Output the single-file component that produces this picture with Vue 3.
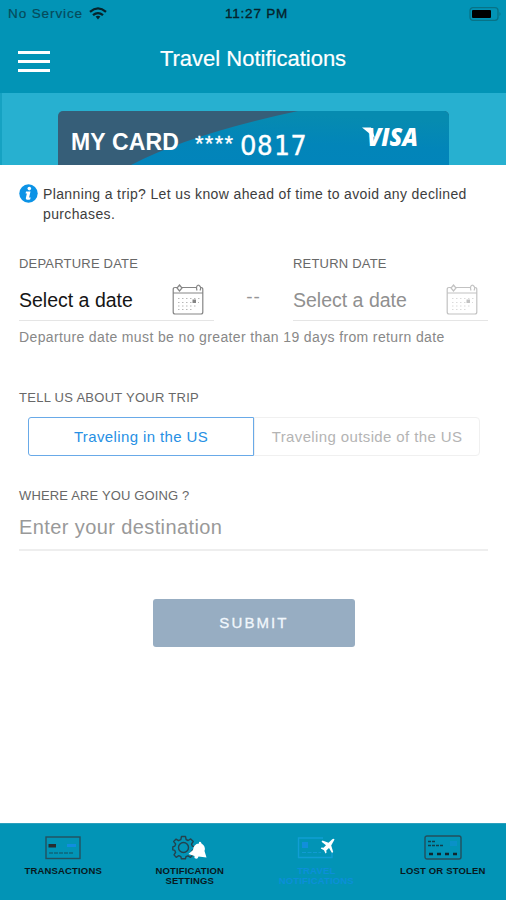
<script setup>
import { ref } from 'vue'

const dates = [
  { id: 'departure', label: 'DEPARTURE DATE', active: true },
  { id: 'return', label: 'RETURN DATE', active: false },
]
const destination = ref('')
const region = ref('us')
</script>

<template>
  <div class="screen">
    <div class="status">
      <div class="carrier">
        <span>No Service</span>
        <svg width="18" height="13" viewBox="0 0 18 13" fill="none" stroke="#06232b" stroke-width="2.3">
          <path d="M1 4.800Q9-2 17 4.800M4 8.200Q9 4 14 8.200" />
          <path d="M6.600 9.600Q9 7.800 11.400 9.600L9 12.400z" fill="#06232b" stroke="none" />
        </svg>
      </div>
      <span class="clock">11:27 PM</span>
      <svg class="battery" width="33" height="14" viewBox="0 0 33 14">
        <rect x="1" y=".7" width="28" height="12.6" rx="3" fill="none" stroke="#087387" stroke-width="1.3" />
        <rect x="3" y="3" width="19" height="8" rx="1" fill="#000" />
        <path d="M30.500 5v4q2-2 0-4" fill="#087387" />
      </svg>
    </div>

    <header class="header">
      <button class="menu" aria-label="Menu"><i></i><i></i><i></i></button>
      <h1>Travel Notifications</h1>
    </header>

    <div class="band">
      <div class="card">
        <svg class="card-art" width="391" height="54" viewBox="0 0 391 54" preserveAspectRatio="none">
          <defs>
            <linearGradient id="sea" x1="0" y1="1" x2=".25" y2="0">
              <stop offset="0" stop-color="#0284bb" />
              <stop offset=".5" stop-color="#0285b9" />
              <stop offset="1" stop-color="#068bb0" />
            </linearGradient>
          </defs>
          <rect width="391" height="54" fill="#365e78" />
          <path d="M73 54Q132 23 240 0H391V54z" fill="url(#sea)" />
        </svg>
        <span class="card-name">MY CARD</span>
        <span class="stars">****</span>
        <span class="digits"><span class="zero">0</span>817</span>
        <svg class="visa" width="64" height="36" viewBox="0 0 64 36">
          <path d="M1 7.500H10L14 18z" fill="#fff" />
          <text x="6" y="26" textLength="51" lengthAdjust="spacingAndGlyphs">VISA</text>
        </svg>
      </div>
    </div>

    <main class="main">
      <div class="info">
        <svg width="19" height="19" viewBox="0 0 19 19">
          <circle cx="9.5" cy="9.5" r="9.2" fill="#0c93e6" />
          <circle cx="10.3" cy="4.6" r="1.8" fill="#fff" />
          <path d="M7 7.500h4.500l-1.400 6h1.600l-.6 2q-4.800 1-4.200-1.800l1-4.300H6.600z" fill="#fff" />
        </svg>
        <p>Planning a trip? Let us know ahead of time to avoid any declined<br />purchases.</p>
      </div>

      <div class="dates">
        <template v-for="(d, i) in dates" :key="d.id">
          <span v-if="i" class="dash">--</span>
          <div class="field" :class="{ muted: !d.active }">
            <label class="label">{{ d.label }}</label>
            <div class="picker">
              <span>Select a date</span>
              <svg width="32" height="32" viewBox="0 0 32 32" fill="none" stroke="currentColor" stroke-width="1.2">
                <path d="M5 3.500H3Q1.200 3.500 1.200 5.500V28Q1.200 30 3 30H29Q30.800 30 30.800 28V5.500Q30.800 3.500 29 3.500H28M9 3.500H24M1.200 9H30.800" />
                <path d="M7.500 1L10 4 7.500 7 5 4zM26.500 1Q23.500 2 25 6.500M26.500 1Q30 3 28 6.500" />
                <g stroke-width=".9" opacity=".65">
                  <path d="M6 14.500H28M6 18.500H27M6 22H24M6 25.500H20" stroke-dasharray="1.500 2.500" />
                </g>
                <rect x="20.500" y="15.500" width="3.500" height="3.500" fill="currentColor" stroke="none" />
              </svg>
            </div>
          </div>
        </template>
      </div>
      <p class="hint">Departure date must be no greater than 19 days from return date</p>

      <div class="label trip-label">TELL US ABOUT YOUR TRIP</div>
      <div class="segments">
        <button :class="{ on: region === 'us' }" @click="region = 'us'">Traveling in the US</button>
        <button :class="{ on: region === 'abroad' }" @click="region = 'abroad'">Traveling outside of the US</button>
      </div>

      <label class="label where-label" for="destination">WHERE ARE YOU GOING ?</label>
      <input id="destination" v-model="destination" class="destination" placeholder="Enter your destination" />

      <button class="submit">SUBMIT</button>
    </main>

    <nav class="tabs">
      <a class="tab">
        <svg width="36" height="26" viewBox="0 0 36 26">
          <rect x="1" y="2" width="34" height="21.5" fill="none" stroke="#24515e" stroke-width="1.4" />
          <rect x="3.5" y="9" width="7.5" height="3.5" fill="#292c30" />
          <rect x="22" y="9" width="9" height="3" fill="#118de0" />
          <path d="M4 18H28" stroke="#154e5c" stroke-dasharray="4 1" />
        </svg>
        <span>TRANSACTIONS</span>
      </a>
      <a class="tab">
        <svg width="36" height="26" viewBox="0 0 36 26">
          <g fill="none" stroke="#24424d" stroke-width="1.4" stroke-linejoin="round">
            <path d="M9.500 1.500h4l.6 3 2 1 2.600-1.600 2.500 2.600-1.700 2.600.8 2 2 .6v3l-2 .8-.8 2 1.500 2.500-2.500 2.300-2.500-1.500-2 .9-.6 2h-4l-.6-2.100-2-.9-2.600 1.600-2.200-2.400 1.600-2.500-.8-2-2-.6v-3l2.100-.7.8-2L1.700 6.500 4.100 4.100l2.400 1.600 2.300-1z" />
            <circle cx="11.5" cy="12.5" r="5" />
          </g>
          <path d="M27 7Q29 6 29.500 8.500Q34 11 32.500 16L34.500 22.500 26.500 21.500Q25.500 25 22.500 23L22.500 21 16.500 19 21 15Q21.500 9 27 8.500z" fill="#fff" />
        </svg>
        <span>NOTIFICATION<br />SETTINGS</span>
      </a>
      <a class="tab current">
        <svg width="38" height="26" viewBox="0 0 38 26">
          <path d="M26 3H1.500V22.500H35V18" fill="none" stroke="#119ed4" stroke-width="1.4" />
          <rect x="5" y="7" width="6" height="6" fill="#118fdb" />
          <path d="M5 17.500H24" stroke="#119bd2" stroke-dasharray="4 1.500" />
          <path d="M37.500 4.500Q36.500 3 35 4.500L31.500 7.800 25.500 5.500 24.500 6.700 29 10.200 26.500 12.800 24.500 12.500 23.800 13.500 27 15.200 28.500 18.500 29.500 17.800 29.300 15.500 32 13 35 18 36.200 17 34.200 10.500z" fill="#fff" />
        </svg>
        <span>TRAVEL<br />NOTIFICATIONS</span>
      </a>
      <a class="tab">
        <svg width="38" height="26" viewBox="0 0 38 26">
          <rect x="1" y="1" width="36" height="23" rx="2" fill="none" stroke="#244f5c" stroke-width="1.4" />
          <path d="M4 6.500H11M4 10.500H19" stroke="#123f4b" stroke-width="1.4" stroke-dasharray="3 1" />
          <rect x="26" y="6" width="7" height="5" fill="#0a91c8" />
          <path d="M5 19H34" stroke="#10272f" stroke-width="2.6" stroke-dasharray="4 4" />
        </svg>
        <span>LOST OR STOLEN</span>
      </a>
    </nav>
  </div>
</template>

<style>
body { margin: 0; background: #fff; }
</style>

<style scoped>
* { box-sizing: border-box; }
.screen { width: 506px; height: 900px; display: flex; flex-direction: column; background: #fff; font-family: "Liberation Sans", Arial, sans-serif; overflow: hidden; }
button { font-family: inherit; padding: 0; margin: 0; }
p, h1 { margin: 0; font-weight: 400; }
.status { height: 27px; background: #0294b6; display: grid; grid-template-columns: 1fr auto 1fr; align-items: center; padding: 0 4px 0 8px; font-size: 13.5px; color: #06232b; }
.carrier { display: flex; align-items: center; gap: 6px; color: #064b5b; letter-spacing: .9px; -webkit-text-stroke: .2px #064b5b; }
.clock { letter-spacing: .8px; padding-left: 3px; -webkit-text-stroke: .35px #06232b; }
.battery { justify-self: end; }
.header { height: 66px; background: #0294b6; display: grid; grid-template-columns: 32px 1fr 32px; padding: 0 18px; }
.menu { border: 0; background: none; display: flex; flex-direction: column; gap: 6px; padding-top: 24px; }
.menu i { display: block; width: 32px; height: 3px; background: #fff; }
h1 { color: #fff; font-size: 22px; line-height: 26px; padding-top: 19px; text-align: center; -webkit-text-stroke: .2px #fff; }
.band { height: 72px; background: #27b0d0; border-left: 2px solid #15a2c2; padding: 18px 0 0 56px; }
.card { position: relative; width: 391px; height: 54px; border-radius: 5px 5px 0 0; overflow: hidden; display: flex; align-items: flex-start; padding-left: 13px; color: #fff; }
.card-art { position: absolute; inset: 0; }
.card-name, .stars, .digits, .visa { position: relative; }
.card-name { font-size: 23px; font-weight: 700; line-height: 26px; margin-top: 18px; width: 124px; white-space: nowrap; letter-spacing: .15px; }
.stars { font-size: 22px; line-height: 26px; margin-top: 20px; width: 45px; letter-spacing: 1.3px; -webkit-text-stroke: .3px #fff; }
.digits { font-family: "DejaVu Sans Mono", monospace; font-size: 26px; line-height: 28px; margin-top: 21px; width: 121px; letter-spacing: 1.2px; -webkit-text-stroke: .3px #fff; }
.zero { font-family: "DejaVu Sans", sans-serif; letter-spacing: .4px; }
.visa text { font-family: "Open Sans", sans-serif; font-size: 25px; font-weight: 800; font-style: italic; fill: #fff; }
.visa { margin-top: 9px; flex: none; }
.main { flex: 1; display: flex; flex-direction: column; padding: 19px 18px 0 19px; }
.info { display: flex; gap: 5px; font-size: 14px; line-height: 20px; color: #3d3d3d; white-space: nowrap; letter-spacing: .37px; }
.info p { height: 40px; }
.label { display: block; font-size: 13px; line-height: 16px; color: #686868; letter-spacing: .2px; }
.dates { display: flex; margin-top: 32px; }
.field { width: 195px; border-bottom: 1px solid #e5e5e5; height: 65px; }
.picker { display: flex; align-items: center; height: 56px; font-size: 19.5px; color: #151515; }
.picker span { width: 153px; }
.picker svg { color: #858585; margin-top: -1px; }
.muted .picker { color: #909090; }
.muted .picker svg { color: #c2c2c2; }
.dash { width: 79px; text-align: center; padding-top: 31px; font-size: 19px; line-height: 20px; color: #969696; letter-spacing: 1px; }
.hint { font-size: 14px; line-height: 18px; margin-top: 7px; color: #888; white-space: nowrap; letter-spacing: .37px; }
.trip-label { margin-top: 44px; letter-spacing: .28px; }
.segments { display: flex; margin: 11px 8px 0 9px; height: 39px; }
.segments button { flex: 1; border: 1px solid #f0f0f0; border-radius: 0 4px 4px 0; background: #fff; font-size: 15px; color: #b4b4b4; letter-spacing: .38px; }
.segments button.on { border: 1.5px solid #69aae8; color: #2790e4; border-radius: 3px 0 0 3px; }
.where-label { margin-top: 32px; letter-spacing: .15px; }
.destination { border: 0; border-bottom: 2px solid #eee; outline: 0; height: 47px; padding: 2px 0 0; font: 20px/30px "Liberation Sans", Arial, sans-serif; color: #222; letter-spacing: .4px; }
.destination::placeholder { color: #999; opacity: 1; }
.submit { width: 202px; height: 48px; margin: 48px 0 0 134px; border: 0; border-radius: 3px; background: #97adc2; color: #f1f7fc; font-size: 15px; letter-spacing: 2.1px; padding: 0 0 2px 0; -webkit-text-stroke: .3px #f1f7fc; }
.tabs { height: 77px; background: #0294b6; border-top: 1px solid #2ba0bd; display: grid; grid-template-columns: repeat(4, 1fr); }
.tab { display: flex; flex-direction: column; align-items: center; padding-top: 11px; color: #09181d; font-size: 9.5px; font-weight: 700; line-height: 10px; text-align: center; letter-spacing: .15px; white-space: nowrap; }
.tab svg { margin-bottom: 5px; }
.current { color: #0c8fd9; }
</style>
